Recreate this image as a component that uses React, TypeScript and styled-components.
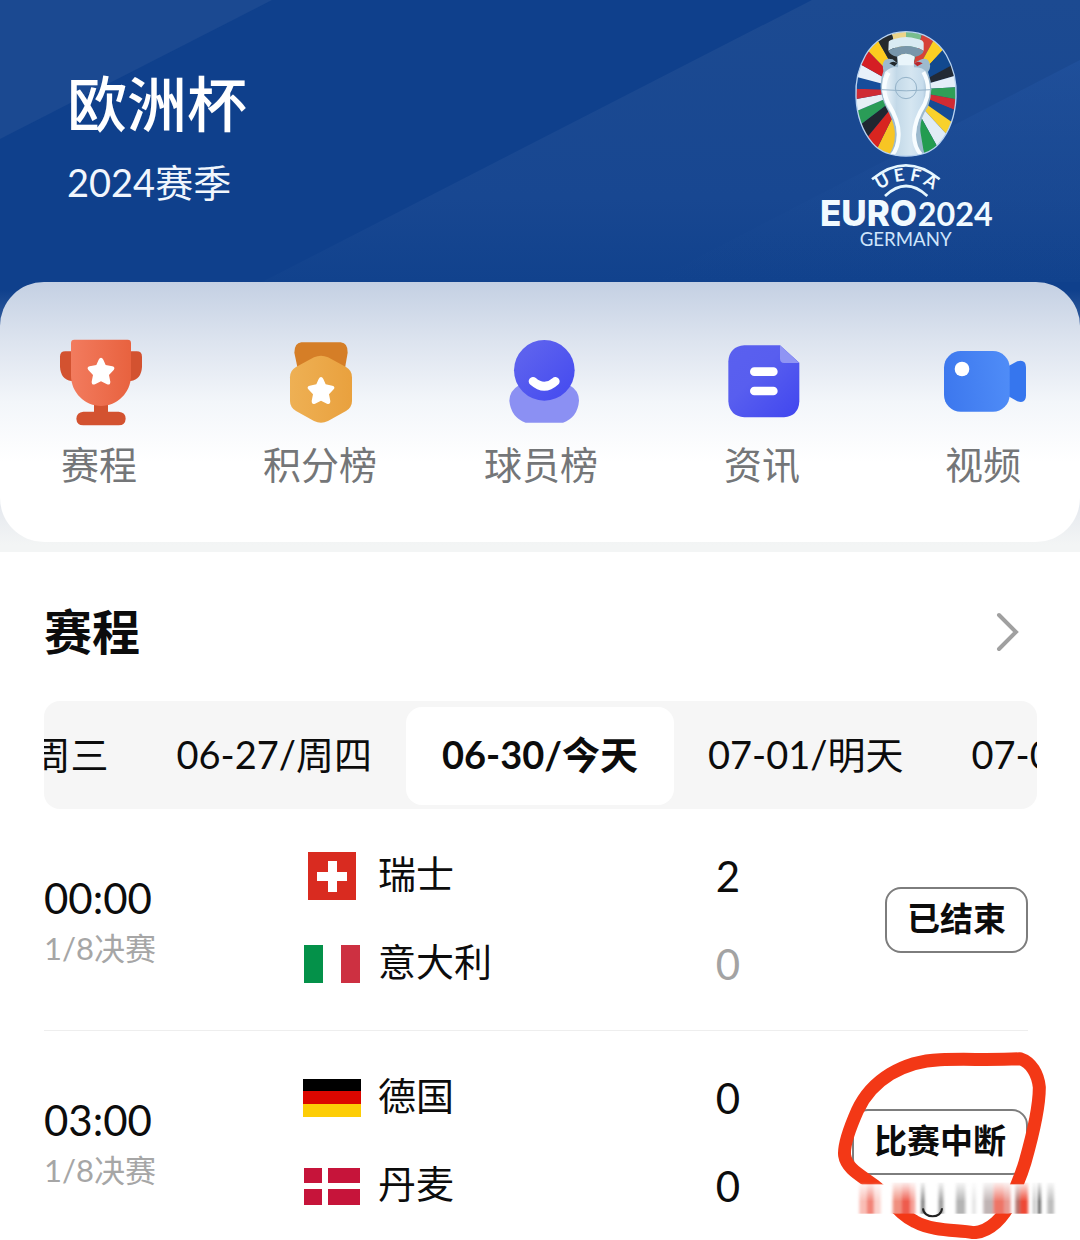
import React, { useLayoutEffect, useRef, useState } from "react";
import styled, { createGlobalStyle, css } from "styled-components";

const GlobalStyle = createGlobalStyle`
  *, *::before, *::after { box-sizing: border-box; }
  body {
    margin: 0;
    background: #fff;
    color: #0c0c0c;
    font-family: Lato, "Noto Sans CJK SC", sans-serif;
  }
  button { font: inherit; color: inherit; border: 0; background: none; padding: 0; cursor: pointer; }
  a { color: inherit; text-decoration: none; }
  h1, h2, p, ul { margin: 0; padding: 0; }
  ul { list-style: none; }
`;

const Page = styled.div`
  overflow: hidden;
`;

const Hero = styled.div`
  padding-bottom: 10px;
  background: linear-gradient(to bottom, #0f408c 290px, #e0e4ec 490px, #f3f5f5 545px);
`;

const Header = styled.header`
  display: flex;
  justify-content: space-between;
  padding: 20px 70px 22px 67px;
  position: relative;
  isolation: isolate;
`;

const Beams = styled.svg`
  position: absolute;
  inset: 0;
  width: 100%;
  height: 100%;
  z-index: -1;
`;

const Titles = styled.div`
  padding-top: 44px;
`;

const Title = styled.h1`
  font-size: 60px;
  line-height: 80px;
  font-weight: 500;
  color: #fff;
`;

const Season = styled.p`
  margin-top: 8px;
  font-size: 38px;
  line-height: 60px;
  color: #f1f6fd;
`;

const LogoSvg = styled.svg`
  display: block;
  width: 200px;
  height: 240px;
`;

const NavCard = styled.nav`
  display: flex;
  justify-content: space-between;
  padding: 52px 40px 52px 42px;
  border-radius: 44px;
  background: linear-gradient(to bottom, #c4d0e3 0, #dde4ef 60px, #f3f6fa 120px, #fff 180px);
`;

const NavItem = styled.a`
  display: flex;
  flex-direction: column;
  align-items: center;
  gap: 8px;
  width: 114px;
  font-size: 38px;
  line-height: 52px;
  color: #747678;
  white-space: nowrap;
`;

const NavIcon = styled.svg`
  width: 96px;
  height: 96px;
`;

const Schedule = styled.main`
  padding: 42px 43px 0 44px;
`;

const SectionHead = styled.div`
  display: flex;
  align-items: center;
  justify-content: space-between;
  padding: 0 12px 0 0;
`;

const SectionTitle = styled.h2`
  font-size: 48px;
  line-height: 76px;
  font-weight: 700;
`;

const MoreButton = styled.button`
  display: flex;
  svg { width: 34px; height: 48px; }
`;

const DateStrip = styled.div`
  display: flex;
  position: relative;
  margin-top: 31px;
  padding: 6px 0 4px;
  border-radius: 16px;
  background: #f6f6f6;
  overflow-x: auto;
  scrollbar-width: none;
  &::-webkit-scrollbar { display: none; }
`;

const DateTab = styled.button<{ $active: boolean }>`
  flex: none;
  padding: 0 34px;
  height: 98px;
  border-radius: 16px;
  font-size: 38px;
  line-height: 94px;
  padding-bottom: 4px;
  white-space: nowrap;
  ${(p) => p.$active && css`
    padding-left: 36px;
    padding-right: 36px;
    background: #fff;
    font-weight: 700;
  `}
`;

const MatchList = styled.ul`
  padding-right: 9px;
`;

const MatchRow = styled.li`
  display: grid;
  grid-template-columns: 256px 1fr 270px;
  align-items: center;
  padding: 23px 0 22px;
  border-bottom: 1px solid #eeeeee;
  &:last-child { padding-bottom: 9px; border-bottom: 0; }
`;

const Kickoff = styled.div`
  padding-top: 4px;
  font-size: 42px;
  line-height: 52px;
`;

const Stage = styled.div`
  font-size: 31px;
  line-height: 48px;
  color: #a6a6a6;
`;

const TeamLine = styled.div`
  display: flex;
  align-items: center;
  height: 88px;
`;

const FlagSvg = styled.svg`
  width: 64px;
  height: 48px;
`;

const TeamName = styled.span`
  flex: 1;
  padding: 0 0 6px 14px;
  font-size: 38px;
  line-height: 52px;
`;

const Score = styled.span<{ $dim?: boolean }>`
  width: 60px;
  text-align: center;
  font-size: 42px;
  line-height: 52px;
  color: ${(p) => (p.$dim ? "#a3a3a3" : "inherit")};
`;

const StatusCell = styled.div`
  position: relative;
  display: flex;
  justify-content: flex-end;
`;

const StatusButton = styled.button`
  height: 66px;
  padding: 0 20px 4px;
  border: 2px solid #7d7d7d;
  border-radius: 16px;
  font-size: 33px;
  line-height: 58px;
  font-weight: 700;
`;

const Scribble = styled.svg`
  position: absolute;
  right: -52px;
  top: -70px;
  width: 260px;
  height: 200px;
  pointer-events: none;
`;

/* ---------- Tournament logo ---------- */

// Points clockwise round the rim; each colour fills up to the next point.
const rim: [number, number, string][] = [
  [244, 36, "#ecd488"],
  [288, 30, "#79bd8e"],
  [338, 36, "#d64238"],
  [374, 55, "#fbcf23"],
  [403, 85, "#12498f"],
  [427, 135, "#222a35"],
  [436, 167, "#e3eef8"],
  [440, 202, "#2f9f57"],
  [441, 238, "#d02b33"],
  [440, 272, "#154b94"],
  [428, 308, "#f8d12c"],
  [412, 345, "#e0ecf5"],
  [382, 380, "#239c50"],
  [345, 410, "#a8c9e6"],
  [250, 410, "#f7c524"],
  [203, 382, "#d82520"],
  [173, 350, "#202630"],
  [154, 312, "#2a9c57"],
  [138, 274, "#e6eff6"],
  [134, 238, "#cf2b34"],
  [134, 206, "#164d9b"],
  [138, 170, "#e8f0fa"],
  [150, 132, "#d51e24"],
  [174, 92, "#fccb1f"],
  [204, 62, "#252a2c"],
];

const emblemPath =
  "M288 35C340 35 384 62 409 105C432 145 440 190 438 230C436 285 418 335 388 370C365 397 330 408 288 408C246 408 211 397 188 370C158 335 140 285 138 230C136 190 144 145 167 105C192 62 236 35 288 35Z";

function Logo() {
  return (
    <LogoSvg viewBox="0 0 600 720" role="img" aria-label="UEFA EURO 2024 Germany">
      <defs>
        <clipPath id="emblem"><path d={emblemPath} /></clipPath>
        <linearGradient id="silver" x1="0" x2="1" y1="0" y2="0">
          <stop offset="0" stopColor="#f7fcff" />
          <stop offset="0.3" stopColor="#c3d9e8" />
          <stop offset="0.6" stopColor="#d5e6f1" />
          <stop offset="0.85" stopColor="#c6dcec" />
          <stop offset="1" stopColor="#8eacc4" />
        </linearGradient>
        <path id="uefaArc" d="M194 522Q288 442 384 522" />
      </defs>
      <g clipPath="url(#emblem)">
        {rim.map(([x, y, fill], i) => {
          const [nx, ny] = rim[(i + 1) % rim.length];
          return <path key={i} fill={fill} d={`M288 210L${x * 2 - 288} ${y * 2 - 210}L${nx * 2 - 288} ${ny * 2 - 210}Z`} />;
        })}
        <path fill="#9dbace" d="M218 134Q222 110 248 118L262 130V108H312V130Q354 100 360 134Q362 146 354 156Q374 208 354 260Q326 300 332 340L344 412H232Q258 380 254 332Q250 300 228 262Q200 205 220 154Z" />
        <path fill="url(#silver)" d="M225 156Q245 138 264 142V108H312V142Q340 142 352 158Q370 206 350 256Q320 300 318 342Q316 386 342 412H236Q262 386 261 342Q260 304 231 260Q204 206 225 156Z" />
        <path fill="none" stroke="#f8fdff" strokeWidth="12" d="M236 158Q210 204 236 252Q268 304 266 346Q265 386 244 408M340 156Q366 204 344 252Q313 300 312 344Q312 382 336 408" />
        <path fill="#21272a" d="M238 130Q250 120 262 130L254 139Z" />
        <path fill="#b9282e" d="M312 130Q324 120 338 130L322 139Z" />
        <path fill="#d9ebf3" d="M236 68Q234 60 256 56Q288 46 320 56Q342 60 341 70V92Q288 64 235 92Z" />
        <path fill="#7896aa" d="M235 92Q288 64 341 92Q338 106 314 110Q288 92 262 110Q240 106 235 92Z" />
        <path fill="#e9f5fb" d="M262 110Q288 92 314 110L310 136H266Z" />
      </g>
      <g fill="none" stroke="#94b2c8" strokeWidth="3">
        <circle cx="288" cy="204" r="32" />
        <path d="M214 209Q288 216 364 209" />
      </g>
      <path d={emblemPath} fill="none" stroke="#b9d3f0" strokeWidth="4" />
      <g fill="none" stroke="#e6f7ff" strokeWidth="8">
        <path d="M186 478Q288 394 389 478" />
        <path d="M225 528Q288 468 352 528" />
      </g>
      <g fill="#f1faff">
        <text fontFamily="Lato" fontWeight="700" fontSize="53">
          <textPath href="#uefaArc" startOffset="50%" textAnchor="middle">U E F A</textPath>
        </text>
        <text x="30" y="617" fontFamily="Inter" fontWeight="800" fontSize="105">EURO</text>
        <text x="548" y="617" textAnchor="end" fontFamily="Lato" fontWeight="700" fontSize="97">2024</text>
        <text x="287" y="679" textAnchor="middle" fontFamily="Lato" fontSize="56" fill="#cfe5fb">GERMANY</text>
      </g>
    </LogoSvg>
  );
}

/* ---------- Navigation icons ---------- */

const star = "M0 -40Q4 -40 7 -34L14 -18L34 -14Q44 -11 38 -3L24 12L28 32Q28 43 18 40L0 31L-18 40Q-28 43 -28 32L-24 12L-38 -3Q-44 -11 -34 -14L-14 -18L-7 -34Q-4 -40 0 -40Z";

const TrophyIcon = () => (
  <NavIcon viewBox="33 42 288 288" aria-hidden>
    <defs>
      <linearGradient id="cup"><stop stopColor="#f27b5e" /><stop offset="1" stopColor="#e8623f" /></linearGradient>
    </defs>
    <path fill="#d35230" d="M76 94H290Q306 94 306 110V140Q304 178 272 183H94Q62 178 60 140V110Q60 94 76 94Z" />
    <path fill="#d35230" d="M162 245H204V275H236Q257 277 257 296Q256 315 236 316H130Q110 315 109 296Q110 277 130 275H162Z" />
    <path fill="url(#cup)" d="M103 59H263Q273 59 273 69V166C273 220 230 258 183 258S93 220 93 166V69Q93 59 103 59Z" />
    <path fill="#fff" transform="translate(183 153)" d={star} />
  </NavIcon>
);

const MedalIcon = () => (
  <NavIcon viewBox="696 42 288 288" aria-hidden>
    <defs>
      <linearGradient id="medal"><stop stopColor="#eeb054" /><stop offset="1" stopColor="#e9a13e" /></linearGradient>
    </defs>
    <path fill="#d57e27" d="M784 67H902Q924 69 923 98L914 150H774L763 98Q763 69 784 67Z" />
    <path fill="url(#medal)" d="M822 112Q843 103 864 112L918 141Q936 151 936 172V242Q936 262 918 273L864 303Q843 314 822 303L768 273Q750 262 750 242V172Q750 151 768 141Z" />
    <path fill="#fff" transform="translate(843 211)" d={star} />
  </NavIcon>
);

const PlayerIcon = () => (
  <NavIcon viewBox="40 42 288 288" aria-hidden>
    <defs>
      <linearGradient id="face" x1="0" y1="0" x2="1" y2="1"><stop offset="0.2" stopColor="#5c61ee" /><stop offset="1" stopColor="#4349f0" /></linearGradient>
    </defs>
    <path fill="#8b90f3" d="M118 196H270Q298 212 298 242Q294 292 250 308H138Q94 292 89 242Q90 212 118 196Z" />
    <circle cx="194" cy="151" r="91" fill="url(#face)" />
    <path d="M160 184Q194 214 227 184" fill="none" stroke="#fff" strokeWidth="26" strokeLinecap="round" />
  </NavIcon>
);

const NewsIcon = () => (
  <NavIcon viewBox="702 42 288 288" aria-hidden>
    <defs>
      <linearGradient id="doc" x1="0" y1="0" x2="1" y2="1"><stop stopColor="#5a60ef" /><stop offset="0.4" stopColor="#585eef" /><stop offset="1" stopColor="#4046ef" /></linearGradient>
    </defs>
    <path fill="url(#doc)" d="M793 76H900L958 128V244Q956 288 912 292H793Q748 288 745 244V124Q748 80 793 76Z" />
    <path fill="#8f94f4" d="M900 76L958 129H912Q900 128 900 116Z" />
    <path d="M823 155H880M823 213H880" stroke="#fff" strokeWidth="26" strokeLinecap="round" />
  </NavIcon>
);

const VideoIcon = () => (
  <NavIcon viewBox="345 42 288 288" aria-hidden>
    <defs>
      <linearGradient id="cam" x1="0" y1="0.5" x2="1" y2="0.4"><stop stopColor="#3d78ee" /><stop offset="1" stopColor="#4f8cf7" /></linearGradient>
    </defs>
    <path fill="#3676ee" d="M560 141L592 124Q618 117 618 142V226Q618 252 592 244L560 226Z" />
    <rect x="372" y="93" width="197" height="182" rx="50" fill="url(#cam)" />
    <circle cx="426" cy="147" r="22" fill="#fff" />
  </NavIcon>
);

/* ---------- Flags ---------- */

type Country = "ch" | "it" | "de" | "dk";

function Flag({ country }: { country: Country }) {
  return (
    <FlagSvg viewBox="0 0 64 48" aria-hidden>
      {country === "ch" && (
        <>
          <rect x="8" width="48" height="48" fill="#d92b20" />
          <path fill="#fff" d="M28 9h9v11h10v9h-10v11h-9v-11h-11v-9h11z" />
        </>
      )}
      {country === "it" && (
        <>
          <rect x="4" y="5" width="19" height="38" fill="#049149" />
          <rect x="41" y="5" width="19" height="38" fill="#cd3041" />
        </>
      )}
      {country === "de" && (
        <>
          <rect x="3" y="5" width="58" height="13" fill="#000" />
          <rect x="3" y="17" width="58" height="13" fill="#dc0700" />
          <rect x="3" y="30" width="58" height="13" fill="#fdcd06" />
        </>
      )}
      {country === "dk" && (
        <path fill="#c6143a" d="M4 6h18v15h-18zM28 6h32v15h-32zM4 27h18v16h-18zM28 27h32v16h-32z" />
      )}
    </FlagSvg>
  );
}

/* ---------- Hand-drawn marker over the interrupted match ---------- */

const smears: [number, number, string][] = [
  [118, 22, "#f9bdb5"], [140, 22, "#f28377"], [162, 20, "#fbd3cd"], [218, 26, "#f0907f"], [244, 28, "#ee5c4d"], [272, 14, "#f5a096"],
  [304, 9, "#666"], [356, 14, "#999"], [408, 28, "#b4b4b4"], [456, 12, "#e5e5e5"], [490, 30, "#c0b4b4"], [520, 34, "#ee7466"], [554, 18, "#e89a92"],
  [586, 14, "#b5736c"], [600, 24, "#ee4a36"], [640, 6, "#aaa"], [654, 8, "#444"], [682, 20, "#bdbdbd"],
];

function Marker() {
  return (
    <Scribble viewBox="0 0 780 600" aria-hidden>
      <defs>
        <linearGradient id="fade" x1="0" y1="0" x2="0" y2="1">
          <stop stopColor="#fff" stopOpacity="0.1" />
          <stop offset="0.6" stopColor="#fff" />
        </linearGradient>
        <mask id="fadeMask"><rect x="100" y="430" width="620" height="96" fill="url(#fade)" /></mask>
        <filter id="soft" x="-5%" width="110%" y="0" height="100%"><feGaussianBlur stdDeviation="4 0" /></filter>
      </defs>
      <path
        d="M600 59C520 64 440 59 360 62C250 66 155 122 112 215C90 265 70 320 74 350C80 390 125 410 170 445C220 485 230 520 285 548C340 578 410 572 460 581C510 580 555 530 570 490C592 430 600 420 615 370C635 300 658 215 658 145C654 105 634 70 600 59Z"
        fill="none"
        stroke="#f33816"
        strokeWidth="39"
        strokeLinejoin="round"
      />
      <rect x="118" y="436" width="590" height="86" fill="#fff" />
      <g mask="url(#fadeMask)" filter="url(#soft)">
        {smears.map(([x, w, fill]) => (
          <rect key={x} x={x} y="430" width={w} height="94" fill={fill} />
        ))}
      </g>
      <path d="M309 508C311 540 365 540 366 508" fill="none" stroke="#222" strokeWidth="6" />
    </Scribble>
  );
}

/* ---------- Data ---------- */

const navItems = [
  { label: "赛程", Icon: TrophyIcon },
  { label: "积分榜", Icon: MedalIcon },
  { label: "球员榜", Icon: PlayerIcon },
  { label: "资讯", Icon: NewsIcon },
  { label: "视频", Icon: VideoIcon },
];

const dates = ["06-26/周三", "06-27/周四", "06-30/今天", "07-01/明天", "07-02/周二"];

interface Match {
  time: string;
  stage: string;
  status: string;
  marked?: boolean;
  teams: { name: string; country: Country; score: number; lost?: boolean }[];
}

const matches: Match[] = [
  {
    time: "00:00",
    stage: "1/8决赛",
    status: "已结束",
    teams: [
      { name: "瑞士", country: "ch", score: 2 },
      { name: "意大利", country: "it", score: 0, lost: true },
    ],
  },
  {
    time: "03:00",
    stage: "1/8决赛",
    status: "比赛中断",
    marked: true,
    teams: [
      { name: "德国", country: "de", score: 0 },
      { name: "丹麦", country: "dk", score: 0 },
    ],
  },
];

function DatePicker() {
  const [active, setActive] = useState(2);
  const strip = useRef<HTMLDivElement>(null);

  // Keep the chosen day in the middle of the strip.
  useLayoutEffect(() => {
    const center = () => {
      const box = strip.current;
      const tab = box?.children[active] as HTMLElement | undefined;
      if (box && tab) box.scrollLeft = tab.offsetLeft - (box.clientWidth - tab.offsetWidth) / 2;
    };
    center();
    document.fonts?.ready.then(center);
    window.addEventListener("resize", center);
    return () => window.removeEventListener("resize", center);
  }, [active]);

  return (
    <DateStrip ref={strip}>
      {dates.map((d, i) => (
        <DateTab key={d} type="button" $active={i === active} aria-pressed={i === active} onClick={() => setActive(i)}>
          {d}
        </DateTab>
      ))}
    </DateStrip>
  );
}

export default function App() {
  return (
    <Page>
      <GlobalStyle />
      <Hero>
        <Header>
          <Beams viewBox="0 0 1080 282" preserveAspectRatio="none" aria-hidden>
            <defs>
              <linearGradient id="beam" x1="0" y1="0" x2="0" y2="1">
                <stop stopColor="#1c4a91" />
                <stop offset="0.7" stopColor="#184791" />
                <stop offset="1" stopColor="#11428d" />
              </linearGradient>
              <linearGradient id="beamFar" x1="0" y1="0" x2="0" y2="1">
                <stop stopColor="#2253a0" stopOpacity="0.6" />
                <stop offset="1" stopColor="#1a4a92" stopOpacity="0" />
              </linearGradient>
            </defs>
            <path fill="#0f408c" d="M0 0H1080V282H0Z" />
            <path fill="#1b4991" d="M0 0H272L0 139Z" />
            <path fill="url(#beam)" d="M812 0H1080V282H262Z" />
            <path fill="url(#beamFar)" d="M1080 60V282H650Z" />
          </Beams>
          <Titles>
            <Title>欧洲杯</Title>
            <Season>2024赛季</Season>
          </Titles>
          <Logo />
        </Header>
        <NavCard>
          {navItems.map(({ label, Icon }) => (
            <NavItem key={label} href="#">
              <Icon />
              {label}
            </NavItem>
          ))}
        </NavCard>
      </Hero>
      <Schedule>
        <SectionHead>
          <SectionTitle>赛程</SectionTitle>
          <MoreButton type="button" aria-label="更多赛程">
            <svg viewBox="0 0 34 48" fill="none" stroke="#a0a0a0" strokeWidth="4" strokeLinecap="round">
              <path d="M8 7L25 24L8 41" />
            </svg>
          </MoreButton>
        </SectionHead>
        <DatePicker />
        <MatchList>
          {matches.map((m) => (
            <MatchRow key={m.time}>
              <div>
                <Kickoff>{m.time}</Kickoff>
                <Stage>{m.stage}</Stage>
              </div>
              <div>
                {m.teams.map((t) => (
                  <TeamLine key={t.name}>
                    <Flag country={t.country} />
                    <TeamName>{t.name}</TeamName>
                    <Score $dim={t.lost}>{t.score}</Score>
                  </TeamLine>
                ))}
              </div>
              <StatusCell>
                <StatusButton type="button">{m.status}</StatusButton>
                {m.marked && <Marker />}
              </StatusCell>
            </MatchRow>
          ))}
        </MatchList>
      </Schedule>
    </Page>
  );
}
